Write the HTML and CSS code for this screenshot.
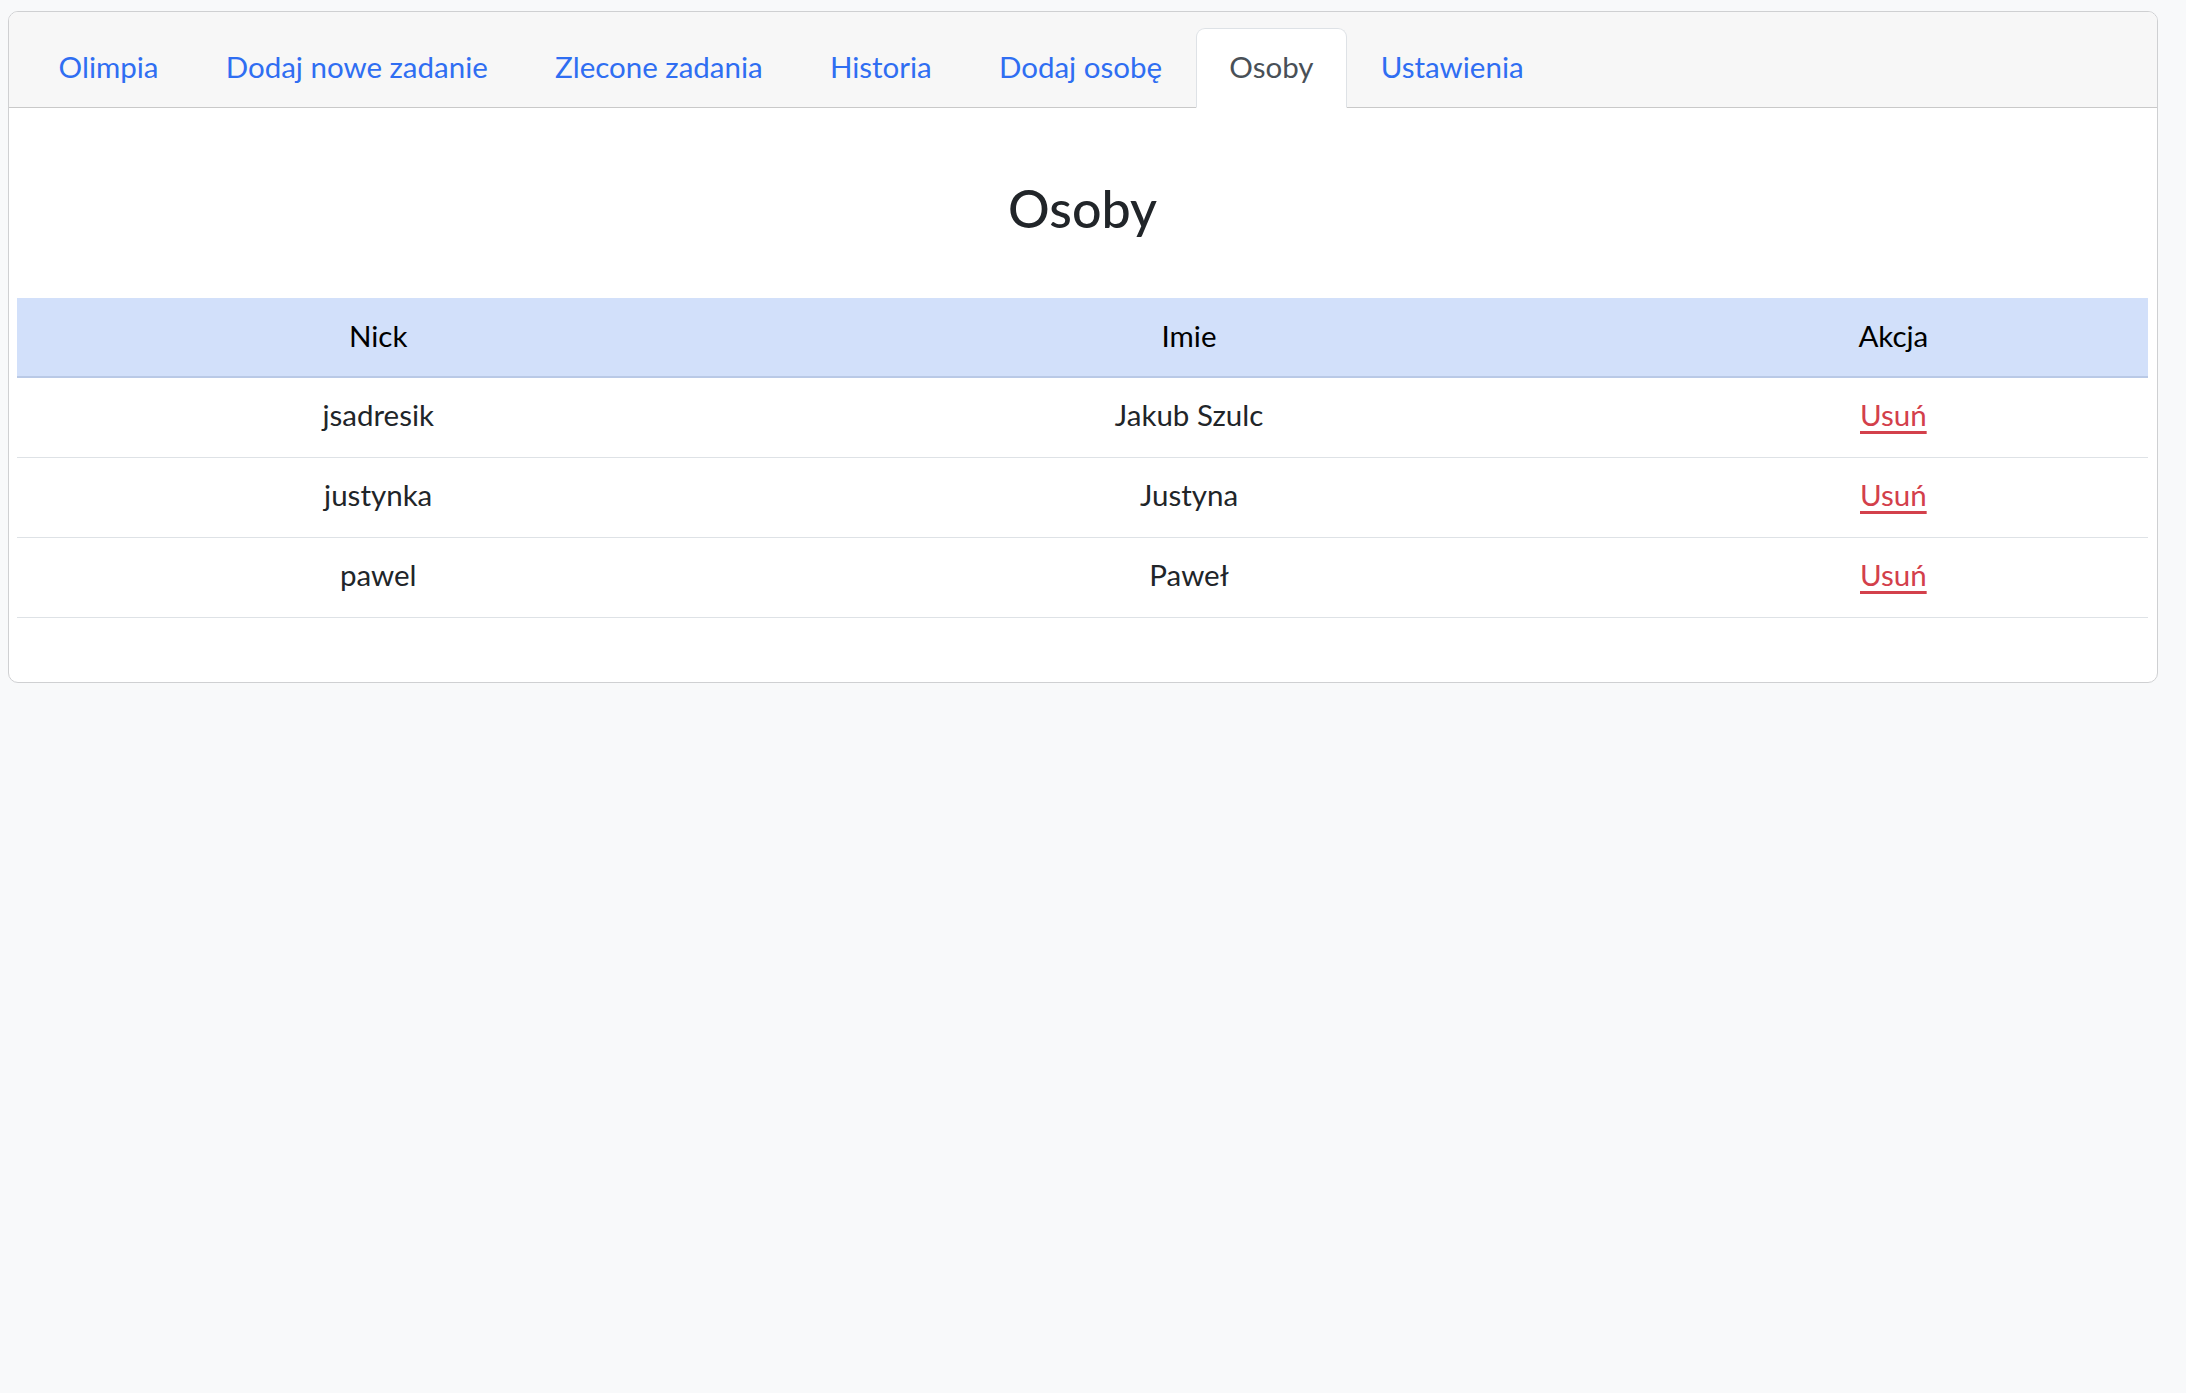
FILE: index.html
```html
<!DOCTYPE html>
<html lang="pl">
<head>
<meta charset="utf-8">
<title>Osoby</title>
<link rel="stylesheet" href="styles.css">
</head>
<body>
<div class="card">
  <div class="card-header">
    <ul class="tabs">
      <li><a class="tab" href="#">Olimpia</a></li>
      <li><a class="tab" href="#">Dodaj nowe zadanie</a></li>
      <li><a class="tab" href="#">Zlecone zadania</a></li>
      <li><a class="tab" href="#">Historia</a></li>
      <li><a class="tab" href="#">Dodaj osobę</a></li>
      <li><a class="tab active" href="#">Osoby</a></li>
      <li><a class="tab" href="#">Ustawienia</a></li>
    </ul>
  </div>
  <div class="card-body">
    <h2 class="title">Osoby</h2>
    <table class="people">
      <thead>
        <tr>
          <th class="col-nick">Nick</th>
          <th class="col-name">Imie</th>
          <th class="col-action">Akcja</th>
        </tr>
      </thead>
      <tbody>
        <tr><td>jsadresik</td><td>Jakub Szulc</td><td><a class="remove" href="#">Usuń</a></td></tr>
        <tr><td>justynka</td><td>Justyna</td><td><a class="remove" href="#">Usuń</a></td></tr>
        <tr><td>pawel</td><td>Paweł</td><td><a class="remove" href="#">Usuń</a></td></tr>
      </tbody>
    </table>
  </div>
</div>
</body>
</html>
```
FILE: styles.css
```css
html, body {
  margin: 0;
  padding: 0;
}
body {
  background: #f8f9fa;
  font-family: Lato, "Noto Sans", sans-serif;
  font-size: 29.5px;
  line-height: 42px;
  color: #212529;
  padding: 11px 28px 0 8px;
}
.card {
  background: #fff;
  border: 1px solid #cfd0d2;
  border-radius: 10px;
  overflow: hidden;
}
.card-header {
  background: #f7f7f7;
  border-bottom: 1px solid #c9c9c9;
  padding: 16px 16px 0 16px;
}
.tabs {
  list-style: none;
  margin: 0 0 -1px 0;
  padding: 0;
  display: flex;
}
.tab {
  display: block;
  padding: 16.5px 32.6px 19.5px 32.6px;
  border: 1px solid transparent;
  border-top-left-radius: 9px;
  border-top-right-radius: 9px;
  color: #2f6ef2;
  text-decoration: none;
}
.tab.active {
  background: #fff;
  color: #495057;
  border-color: #dee2e6 #dee2e6 #fff;
}
.card-body {
  padding: 0 9px 64px 8px;
}
.title {
  margin: 69px 0 59px 0;
  text-align: center;
  font-weight: 500;
  font-size: 52px;
  line-height: 62px;
  color: #212529;
}
.people {
  width: 100%;
  border-collapse: collapse;
  text-align: center;
}
.people th {
  background: #d2e0fa;
  color: #000;
  font-weight: 400;
  padding: 16.5px 8px 19.5px 8px;
  border-bottom: 2px solid #b9c9e6;
}
.people td {
  padding: 15.5px 8px 21.5px 8px;
  border-bottom: 1px solid #dee2e6;
}
.col-nick { width: 33.9%; }
.col-name { width: 42.2%; }
.col-action { width: 23.9%; }
.remove {
  color: #d3404b;
  text-decoration: underline;
  text-underline-offset: 5px;
  text-decoration-thickness: 3px;
}
```
